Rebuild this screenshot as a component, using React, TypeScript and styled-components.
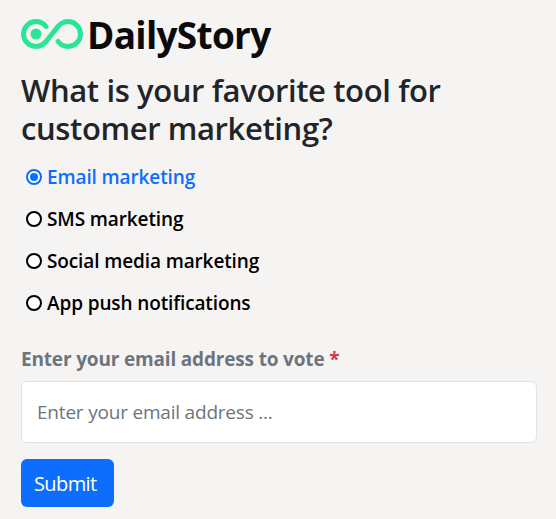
import React from 'react';
import styled, { createGlobalStyle } from 'styled-components';

const FONT = '"Open Sans", "Noto Sans", "Liberation Sans", sans-serif';

const GlobalStyle = createGlobalStyle`
  html, body {
    margin: 0;
    padding: 0;
    background: #f6f4f3;
  }
  * {
    box-sizing: border-box;
  }
`;

const Page = styled.form`
  display: flex;
  flex-direction: column;
  padding: 15px 19px 12px 21px;
  font-family: ${FONT};
`;

const Brand = styled.div`
  display: flex;
  align-items: center;
  gap: 4px;
  height: 40px;
`;

const BrandLogo = styled.svg`
  flex: none;
  margin-top: -3px;
`;

const BrandName = styled.span`
  font-size: 37px;
  font-weight: 700;
  letter-spacing: -0.7px;
  line-height: 40px;
  color: #0b0b0b;
`;

const Title = styled.h1`
  margin: 16px 0 9px;
  font-size: 31px;
  font-weight: 600;
  letter-spacing: -0.38px;
  line-height: 38px;
  color: #212529;
`;

const Options = styled.div`
  display: flex;
  flex-direction: column;
  padding-left: 5px;
`;

const Option = styled.label<{ $active?: boolean }>`
  display: flex;
  align-items: center;
  gap: 5px;
  height: 42px;
  font-size: 19px;
  font-weight: 600;
  letter-spacing: -0.12px;
  color: ${(p) => (p.$active ? '#0d6efd' : '#000000')};
`;

const Radio = styled.span<{ $active?: boolean }>`
  display: flex;
  align-items: center;
  justify-content: center;
  width: 16px;
  height: 16px;
  border-radius: 50%;
  border: 2px solid ${(p) => (p.$active ? '#0d6efd' : '#000000')};
  background: #ffffff;

  &::after {
    content: '';
    display: ${(p) => (p.$active ? 'block' : 'none')};
    width: 8px;
    height: 8px;
    border-radius: 50%;
    background: #0d6efd;
  }
`;

const FieldLabel = styled.label`
  margin-top: 22px;
  font-size: 19px;
  font-weight: 700;
  letter-spacing: -0.17px;
  line-height: 27px;
  color: #6c757d;
`;

const Required = styled.span`
  color: #dc3545;
`;

const EmailInput = styled.input`
  width: 516px;
  height: 62px;
  margin-top: 8px;
  padding: 0 15px;
  border: 1px solid #dee2e6;
  border-radius: 6px;
  background: #ffffff;
  font-family: ${FONT};
  font-size: 19px;
  letter-spacing: -0.2px;
  outline: none;

  &::placeholder {
    color: #6c757d;
    opacity: 1;
  }
`;

const SubmitButton = styled.button`
  width: 93px;
  height: 48px;
  margin-top: 16px;
  padding: 0 0 0 13px;
  border: 0;
  border-radius: 6px;
  background: #0d6efd;
  color: #ffffff;
  font-family: ${FONT};
  font-size: 20px;
  letter-spacing: -0.6px;
  text-align: left;
`;

const Logo = () => (
  <BrandLogo width="62" height="30" viewBox="0 0 62 30" fill="none">
    <path
      d="M25 7.500C22.500 4.500 19 2.500 15 2.500a12.500 12.500 0 0 0 0 25c5.500 0 9-3 12-7.500l8-10c3-4.500 6.500-7.500 12-7.500a12.500 12.500 0 0 1 0 25c-4 0-7.500-2-10-5"
      stroke="#2be597"
      strokeWidth="5"
      strokeLinecap="round"
    />
    <circle cx="15" cy="15" r="5.500" fill="#2be597" />
  </BrandLogo>
);

const OPTIONS = ['Email marketing', 'SMS marketing', 'Social media marketing', 'App push notifications'];

export default function App() {
  return (
    <>
      <GlobalStyle />
      <Page onSubmit={(e) => e.preventDefault()}>
        <Brand>
          <Logo />
          <BrandName>DailyStory</BrandName>
        </Brand>
        <Title>What is your favorite tool for customer marketing?</Title>
        <Options>
          {OPTIONS.map((label, i) => (
            <Option key={label} $active={i === 0}>
              <Radio $active={i === 0} />
              {label}
            </Option>
          ))}
        </Options>
        <FieldLabel>
          Enter your email address to vote <Required>*</Required>
        </FieldLabel>
        <EmailInput placeholder="Enter your email address ..." />
        <SubmitButton type="submit">Submit</SubmitButton>
      </Page>
    </>
  );
}
